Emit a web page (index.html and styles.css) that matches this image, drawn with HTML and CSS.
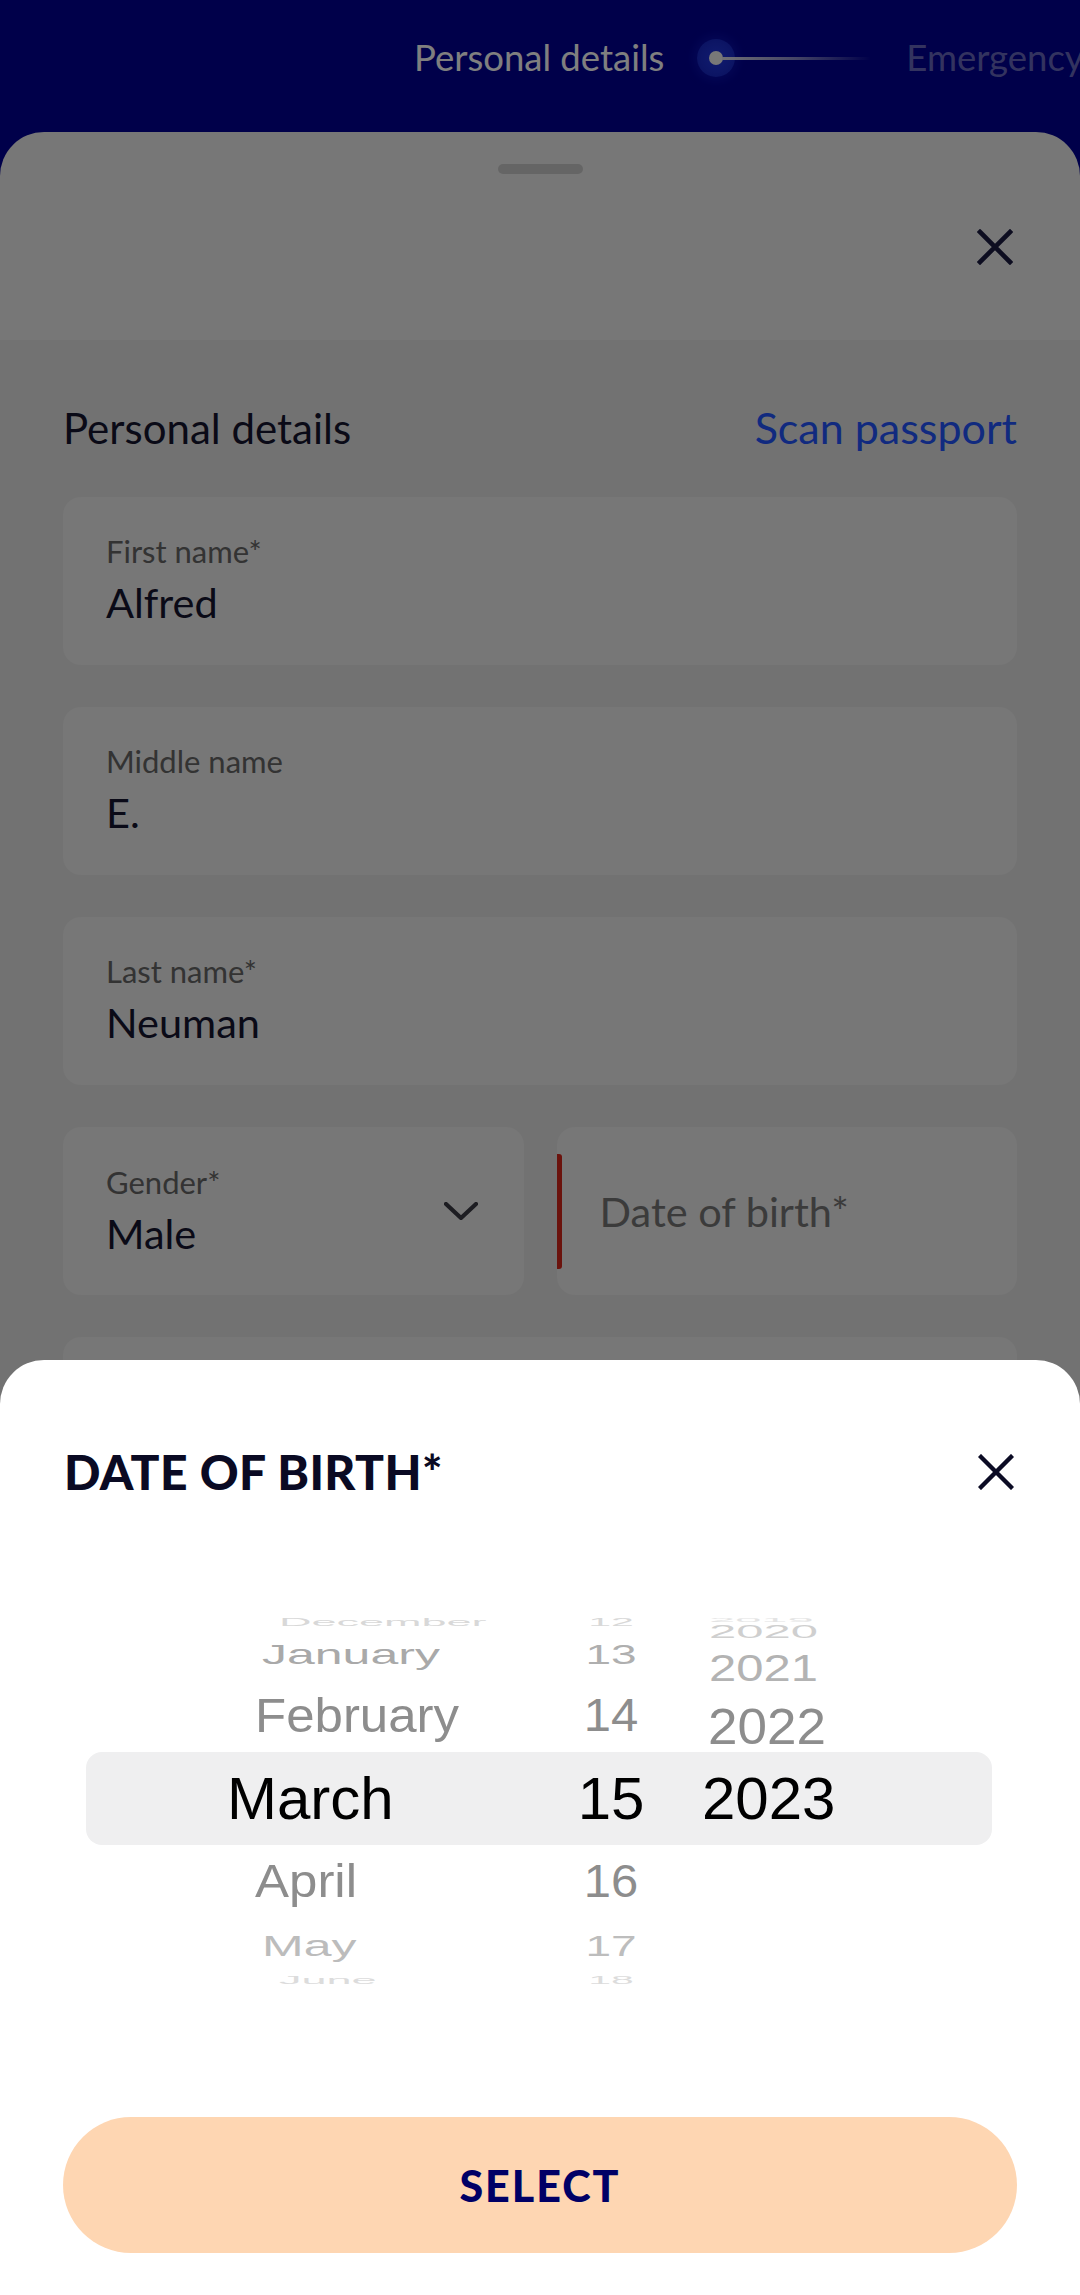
FILE: index.html
```html
<!DOCTYPE html>
<html lang="en">
<head>
<meta charset="utf-8">
<title>Date of birth</title>
<link rel="stylesheet" href="styles.css">
</head>
<body>
<div class="screen">
  <header class="topbar">
    <span class="step-label">Personal details</span>
    <span class="step-marker">
      <span class="step-glow"><span class="step-dot"></span></span>
      <span class="step-line"></span>
    </span>
    <span class="step-label next">Emergency</span>
  </header>

  <section class="sheet">
    <div class="sheet-head">
      <div class="handle"></div>
      <div class="sheet-close-row">
        <svg class="icon-close top" viewBox="0 0 36 36" aria-hidden="true"><path d="M3 3 L33 33 M33 3 L3 33"/></svg>
      </div>
    </div>
    <div class="sheet-body">
      <div class="section-title">
        <h2>Personal details</h2>
        <a class="link">Scan passport</a>
      </div>
      <div class="field">
        <span class="label">First name*</span>
        <span class="value">Alfred</span>
      </div>
      <div class="field">
        <span class="label">Middle name</span>
        <span class="value">E.</span>
      </div>
      <div class="field">
        <span class="label">Last name*</span>
        <span class="value">Neuman</span>
      </div>
      <div class="field-row">
        <div class="field select">
          <div class="field-text">
            <span class="label">Gender*</span>
            <span class="value">Male</span>
          </div>
          <svg class="chevron" viewBox="0 0 34 18" aria-hidden="true"><path d="M2 2 L17 16 L32 2"/></svg>
        </div>
        <div class="field date">
          <span class="focus-bar"></span>
          <span class="placeholder">Date of birth*</span>
        </div>
      </div>
      <div class="field"></div>
    </div>
  </section>

  <div class="scrim"></div>

  <section class="picker-sheet">
    <div class="picker-head">
      <h1>DATE OF BIRTH*</h1>
      <svg class="icon-close" viewBox="0 0 36 36" aria-hidden="true"><path d="M3 3 L33 33 M33 3 L3 33"/></svg>
    </div>

    <div class="wheel">
      <div class="band band-top">
        <div class="col months">
          <div class="w h14 m3"><span class="t f45 s25 c-d3">December</span></div>
          <div class="w h50 m2"><span class="t f50 s56 c-jan">January</span></div>
          <div class="w h73 m1"><span class="t f51 s95 c-d1">February</span></div>
        </div>
        <div class="col days">
          <div class="w h14"><span class="t f41 s27 c-d3">12</span></div>
          <div class="w h50"><span class="t f46 s64 c-13">13</span></div>
          <div class="w h73"><span class="t f49 s94 c-d1">14</span></div>
        </div>
        <div class="col years">
          <div class="w h11 y2"><span class="t f47 s12 c-2019">2019</span></div>
          <div class="w h10 y2"><span class="t f49 s37 c-2020">2020</span></div>
          <div class="w h64 y2"><span class="t f49 s74 c-2021">2021</span></div>
          <div class="w h52 y1"><span class="t f53 s95 c-d1">2022</span></div>
        </div>
      </div>

      <div class="band band-selected">
        <div class="col months"><div class="w h93"><span class="t f60 sel">March</span></div></div>
        <div class="col days"><div class="w h93"><span class="t f60 sel">15</span></div></div>
        <div class="col years"><div class="w h93 y0"><span class="t f60 sel">2023</span></div></div>
      </div>

      <div class="band band-bottom">
        <div class="col months">
          <div class="w h73 m1"><span class="t f51 s90 c-d1">April</span></div>
          <div class="w h55 m2"><span class="t f50 s59 c-may">May</span></div>
          <div class="w h14 m3"><span class="t f45 s25 c-d3b">June</span></div>
        </div>
        <div class="col days">
          <div class="w h73"><span class="t f49 s94 c-d1">16</span></div>
          <div class="w h55"><span class="t f46 s67 c-17">17</span></div>
          <div class="w h14"><span class="t f41 s27 c-d3b">18</span></div>
        </div>
        <div class="col years"></div>
      </div>
    </div>

    <button class="select-btn">SELECT</button>
  </section>
</div>
</body>
</html>
```

FILE: styles.css
```css
* { box-sizing: border-box; }

html, body {
  margin: 0;
  padding: 0;
  background: #000094;
}

.screen {
  position: relative;
  width: 1080px;
  height: 2295px;
  overflow: hidden;
  background: #000094;
  display: flex;
  flex-direction: column;
  font-family: Lato, "Noto Sans", sans-serif;
}

/* ---------- top progress bar ---------- */
.topbar {
  height: 132px;
  flex: none;
  display: flex;
  align-items: center;
  padding: 0 0 16px 414px;
  white-space: nowrap;
  overflow: hidden;
}

.step-label {
  font-size: 36.5px;
  line-height: 1.2;
  color: #ffffff;
  flex: none;
}

.step-label.next {
  color: rgba(255, 255, 255, 0.42);
  margin-left: 35px;
}

.step-marker {
  flex: none;
  display: flex;
  align-items: center;
  margin-left: 33px;
  width: 174px;
}

.step-glow {
  width: 38px;
  height: 38px;
  border-radius: 50%;
  flex: none;
  display: flex;
  align-items: center;
  justify-content: center;
  background: radial-gradient(circle, #2036e0 0%, #1a2ccc 55%, rgba(22, 40, 200, 0.75) 100%);
  box-shadow: 0 0 10px 4px rgba(30, 50, 230, 0.25);
}

.step-dot {
  width: 14px;
  height: 14px;
  border-radius: 50%;
  background: #f0f0f0;
}

.step-line {
  height: 3px;
  width: 149px;
  margin-left: -13px;
  background: linear-gradient(90deg, #e0e0ea 0%, rgba(210, 210, 235, 0.65) 50%, rgba(200, 200, 240, 0) 100%);
}

/* ---------- underlying sheet ---------- */
.sheet {
  flex: 1;
  display: flex;
  flex-direction: column;
  border-radius: 44px 44px 0 0;
  overflow: hidden;
}

.sheet-head {
  height: 208px;
  flex: none;
  background: #eeeeee;
  display: flex;
  flex-direction: column;
}

.handle {
  align-self: center;
  width: 85px;
  height: 10px;
  border-radius: 5px;
  background: #cbcbcb;
  margin-top: 32px;
}

.sheet-close-row {
  display: flex;
  justify-content: flex-end;
  padding-right: 67px;
  margin-top: 55px;
}

.icon-close {
  width: 36px;
  height: 36px;
  flex: none;
}

.icon-close path {
  fill: none;
  stroke: #0b0b24;
  stroke-width: 4.4;
  stroke-linecap: square;
}

.icon-close.top path {
  stroke: #1a1a40;
  stroke-width: 4.6;
}

.sheet-body {
  flex: 1;
  background: #e4e4e4;
  padding: 65px 63px 0 63px;
  display: flex;
  flex-direction: column;
  gap: 42px;
}

.section-title {
  display: flex;
  justify-content: space-between;
  align-items: baseline;
  margin-bottom: 4px;
}

.section-title h2 {
  margin: 0;
  font-size: 42px;
  line-height: 46px;
  font-weight: 400;
  color: #14142e;
}

.link {
  font-size: 43px;
  line-height: 46px;
  color: #2255ff;
}

.field {
  height: 168px;
  flex: none;
  background: #eeeeee;
  border-radius: 18px;
  padding: 37px 43px 0 43px;
  display: flex;
  flex-direction: column;
}

.label {
  font-size: 31px;
  line-height: 34px;
  color: #666666;
}

.value {
  font-size: 41.5px;
  line-height: 48px;
  margin-top: 10px;
  color: #14142e;
}

.field-row {
  display: grid;
  grid-template-columns: 1fr 1fr;
  column-gap: 33px;
}

.field.select {
  flex-direction: row;
  align-items: center;
  justify-content: space-between;
  padding: 0 46px 0 43px;
}

.field-text {
  display: flex;
  flex-direction: column;
}

.chevron {
  width: 34px;
  height: 18px;
}

.chevron path {
  fill: none;
  stroke: #3a3a44;
  stroke-width: 4.2;
  stroke-linecap: round;
  stroke-linejoin: round;
}

.field.date {
  flex-direction: row;
  align-items: center;
  padding: 0;
}

.focus-bar {
  width: 5px;
  height: 115px;
  background: #d6261a;
  border-radius: 0 3px 3px 0;
  flex: none;
}

.placeholder {
  margin-left: 38px;
  font-size: 41.5px;
  line-height: 48px;
  color: #777777;
}

/* ---------- scrim ---------- */
.scrim {
  position: absolute;
  inset: 0;
  background: rgba(0, 0, 0, 0.5);
}

/* ---------- date picker sheet ---------- */
.picker-sheet {
  position: absolute;
  left: 0;
  right: 0;
  top: 1360px;
  bottom: 0;
  background: #ffffff;
  border-radius: 44px 44px 0 0;
  padding: 83px 0 42px 0;
  display: flex;
  flex-direction: column;
}

.picker-head {
  height: 58px;
  display: flex;
  align-items: center;
  justify-content: space-between;
  padding: 0 66px 0 64px;
}

.picker-head h1 {
  margin: 0;
  font-size: 48px;
  line-height: 58px;
  font-weight: 900;
  letter-spacing: 0.4px;
  color: #0a0a23;
}

.wheel {
  margin-top: 114px;
  height: 372px;
  overflow: hidden;
  display: flex;
  flex-direction: column;
  font-family: "Liberation Sans", Arial, sans-serif;
}

.band {
  display: grid;
  grid-template-columns: 300px 168px 1fr;
  padding-left: 227px;
}

.band-top { height: 137px; }
.band-bottom { height: 142px; }

.band-selected {
  height: 93px;
  margin: 0 88px 0 86px;
  padding-left: 141px;
  background: #efeff0;
  border-radius: 16px;
}

.col {
  display: flex;
  flex-direction: column;
}

.band-top .col { justify-content: flex-end; }
.band-bottom .col { justify-content: flex-start; }

.w {
  display: flex;
  align-items: center;
  flex: none;
  white-space: nowrap;
}

.days .w { justify-content: center; }

.t {
  display: block;
  line-height: 1;
  transform-origin: center center;
}

/* row heights */
.h10 { height: 10px; }
.h11 { height: 11px; }
.h14 { height: 14px; }
.h50 { height: 50px; }
.h52 { height: 52px; }
.h55 { height: 55px; }
.h64 { height: 64px; }
.h73 { height: 73px; }
.h93 { height: 93px; }

/* perspective offsets */
.m1 { padding-left: 28px; }
.m2 { padding-left: 35px; }
.m3 { padding-left: 52px; }
.y0 { padding-left: 7px; }
.y1 { padding-left: 13px; }
.y2 { padding-left: 14px; }

/* font sizes */
.f41 { font-size: 41px; }
.f45 { font-size: 45px; }
.f46 { font-size: 46px; }
.f47 { font-size: 47px; }
.f49 { font-size: 49px; }
.f50 { font-size: 50px; }
.f51 { font-size: 51px; }
.f53 { font-size: 53px; }
.f60 { font-size: 60px; }

/* vertical squash from wheel rotation */
.s12 { transform: scaleY(0.12); }
.s25 { transform: scaleY(0.25); }
.s27 { transform: scaleY(0.27); }
.s37 { transform: scaleY(0.37); }
.s56 { transform: scaleY(0.57); }
.s59 { transform: scaleY(0.6); }
.s64 { transform: scaleY(0.62); }
.s67 { transform: scaleY(0.64); }
.s74 { transform: scaleY(0.74); }
.s90 { transform: scaleY(0.91); }
.s94 { transform: scaleY(0.94); }
.s95 { transform: scaleY(0.95); }

/* colours */
.sel { color: #000000; }
.c-d1 { color: #8d8d8d; }
.c-jan { color: #a9a9a9; }
.c-13 { color: #afafaf; }
.c-may { color: #bcbcbc; }
.c-17 { color: #bdbdbd; }
.c-d3 { color: #d8d8d8; }
.c-d3b { color: #dcdcdc; }
.c-2019 { color: #e4e4e4; }
.c-2020 { color: #cfcfcf; }
.c-2021 { color: #b3b3b3; }

.select-btn {
  margin: 130px 63px 0 63px;
  height: 136px;
  flex: none;
  border: none;
  border-radius: 68px;
  background: #fed6b2;
  font-family: Lato, "Noto Sans", sans-serif;
  font-size: 43px;
  font-weight: 900;
  letter-spacing: 2px;
  color: #000066;
  padding: 0;
}
```
